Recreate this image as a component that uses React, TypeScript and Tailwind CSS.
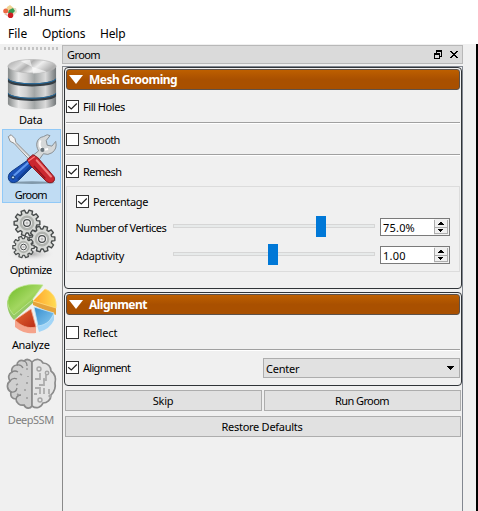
import type { ReactNode } from "react";

const tahoma = "font-['Noto_Sans','Open_Sans',sans-serif]";

function CheckBox({ label, checked = false, spacing = "tracking-[-0.45px]" }: { label: string; checked?: boolean; spacing?: string }) {
  return (
    <label className="flex h-[13px] items-center gap-1">
      <span className="block size-[13px] shrink-0 border border-[#333] bg-white">
        {checked && (
          <svg className="block" width="11" height="11" viewBox="0 0 11 11" fill="none" stroke="#222" strokeWidth="1.2">
            <path d="M1.2 5.3 4.3 8 9.8 2.5" />
          </svg>
        )}
      </span>
      <span className={`leading-[13px] whitespace-nowrap ${spacing}`}>{label}</span>
    </label>
  );
}

function GroupHeader({ title }: { title: string }) {
  return (
    <div className="mb-px flex h-[21px] items-center gap-[6px] rounded-[3px] border border-[#5e5148] bg-linear-to-b from-[#bd5f00] to-[#a95000] to-50% pl-[2px]">
      <svg width="14" height="9" viewBox="0 0 14 9">
        <path d="M0 0H14L7 9Z" fill="#fff" />
      </svg>
      <span className="text-[12px] leading-[16px] font-bold tracking-[-0.53px] text-white">{title}</span>
    </div>
  );
}

function Separator() {
  return <div className="h-[2px] border-t border-[#a0a0a0] bg-white" />;
}

function SliderRow({ label, spacing, track, value }: { label: string; spacing: string; track: ReactNode; value: string }) {
  return (
    <div className="flex h-[18px] items-center">
      <span className={`relative top-px left-[-0.5px] w-[97px] whitespace-nowrap ${spacing}`}>{label}</span>
      <div className="relative -top-px h-[4px] w-[202px] border border-[#d6d6d6] bg-[#e7eaea]">{track}</div>
      <div className="ml-[5px] flex h-[18px] w-[70px] border border-[#7a7a7a] bg-white">
        <span className="relative top-px flex-1 pl-[2px] leading-4 tracking-[0.2px]">{value}</span>
        <svg width="15" height="16" viewBox="0 0 15 16" shapeRendering="crispEdges">
          <path d="M0 0H15V16H0Z" fill="#f0f0f0" />
          <path d="M.5 1V14.5H13.5V1M.5 8.5H13.5" fill="none" stroke="#adadad" />
          <path d="M6 3h2v1h1v1h1v1H4V5h1V4h1zM4 10h5v1H8v1H7v1H6v-1H5v-1H4z" fill="#000" />
        </svg>
      </div>
    </div>
  );
}

function Tool({ label, icon, height, gap, spacing, active = false, disabled = false }: { label: string; icon: ReactNode; height: string; gap: string; spacing: string; active?: boolean; disabled?: boolean }) {
  return (
    <div className={`flex w-[59px] flex-col items-center border ${height} ${active ? "border-[#91c9f7] bg-[#c0dcf3]" : "border-transparent"} ${disabled ? "text-[#808080]" : ""}`}>
      {icon}
      <span className={`pr-[1.5px] leading-[16px] ${gap} ${spacing}`}>{label}</span>
    </div>
  );
}

function Disks() {
  return (
    <svg width="52" height="54" viewBox="0 0 52 54">
      <defs>
        <linearGradient id="metal">
          <stop stopColor="#858989" /><stop offset=".22" stopColor="#e6e6e6" /><stop offset=".38" stopColor="#d0d0d0" /><stop offset=".55" stopColor="#a2a6a6" /><stop offset=".78" stopColor="#dadada" /><stop offset="1" stopColor="#73787a" />
        </linearGradient>
        <linearGradient id="lid" x2="1" y2=".35">
          <stop stopColor="#a2a2a2" /><stop offset=".35" stopColor="#ddd" /><stop offset=".5" stopColor="#b0b0b0" /><stop offset=".7" stopColor="#eee" /><stop offset="1" stopColor="#b0b0b0" />
        </linearGradient>
      </defs>
      <path d="M1 39v8c5 7 45 7 50 0v-8z" fill="url(#metal)" />
      <path d="M1 35v4c5 6 45 6 50 0v-4z" fill="#353d43" />
      <path d="M1 24v11c5 7 45 7 50 0V24z" fill="url(#metal)" />
      <path d="M1 35.5c5 7 45 7 50 0" fill="none" stroke="#2470a8" />
      <path d="M1 20v4c5 6 45 6 50 0v-4z" fill="#353d43" />
      <path d="M1 8v12c5 7 45 7 50 0V8z" fill="url(#metal)" />
      <path d="M1 20.5c5 7 45 7 50 0" fill="none" stroke="#2470a8" />
      <ellipse cx="26" cy="7.5" rx="25" ry="7" fill="url(#lid)" stroke="#b0b0b0" strokeWidth=".6" />
      <path d="M26 8 14 2q6-1 10-1zM26 8l15 5q-8 2-14 2z" fill="#fff" opacity=".6" />
    </svg>
  );
}

function Tools() {
  return (
    <svg width="54" height="56" viewBox="-1 -2 56 58">
      <ellipse cx="27" cy="53.5" rx="24" ry="1.4" fill="#5f7584" opacity=".65" />
      <path d="M29 24 34 20C30 14 32 6 39 5l4-2 3 1-4 5 1 5 5 1 4-5q2 8-4 12-4 3-9 1l-5 7z" fill="#d5d8d9" stroke="#858c90" />
      <path d="M36 9q-3 7 3 10l5-1" fill="none" stroke="#fff" strokeWidth="2" />
      <circle cx="38" cy="19" r="2.2" fill="#68737a" />
      <path d="m28 26 5 5-20 20c-4 4-11 3-11-3 0-3 1-4 3-6z" fill="#1c52b8" stroke="#0c377f" />
      <path d="m27 29-19 17" stroke="#5f97ed" strokeWidth="2.2" strokeLinecap="round" />
      <path d="m29 33-17 17" stroke="#123f93" strokeWidth="2" />
      <circle cx="7" cy="48" r="1.7" fill="#c0dcf3" stroke="#082c62" />
      <path d="m2 5 3-2 4 4 1 4 16 16-2 2L8 12 4 10z" fill="#f4f4f4" stroke="#888" />
      <path d="m10 12 15 15" stroke="#aaa" />
      <path d="m22 29 6-5 5 3 17 20c3 5-3 9-8 5L25 35z" fill="#cb2730" stroke="#83151c" />
      <path d="m32 30 15 17" stroke="#f18282" strokeWidth="2.2" strokeLinecap="round" />
      <path d="m23 31 7-5" stroke="#ff7777" strokeWidth="1.3" />
      <path d="m29 36 12 13" stroke="#8e141e" strokeWidth="1.5" />
    </svg>
  );
}

function gearPath(teeth: number) {
  const points: string[] = [];
  const shape: [number, number][] = [[-0.38, 10], [-0.25, 13], [0.2, 13], [0.32, 10]];
  for (let i = 0; i < teeth; i++) {
    for (const [offset, radius] of shape) {
      const angle = ((i + offset) / teeth) * Math.PI * 2;
      points.push(`${(radius * Math.cos(angle)).toFixed(2)} ${(radius * Math.sin(angle)).toFixed(2)}`);
    }
  }
  return `M${points.join("L")}Z`;
}

function Gear({ x, y, s }: { x: number; y: number; s: number }) {
  return (
    <g transform={`translate(${x} ${y}) scale(${s})`} stroke="#484c4c" strokeWidth="1.4">
      <path d={gearPath(10)} fill="#d8dad7" strokeLinejoin="round" />
      <circle r="6.2" fill="#eee" stroke="#b0b3af" strokeWidth="2.4" />
      <circle r="3.4" fill="#f1f1f1" strokeWidth="1.2" />
      <circle r="1.5" fill="#c0c0c0" stroke="none" />
    </g>
  );
}

function Gears() {
  return (
    <svg width="52" height="53" viewBox="0 0 52 53">
      <defs><radialGradient id="shade"><stop stopColor="#888" /><stop offset="1" stopColor="#f0f0f0" stopOpacity="0" /></radialGradient></defs>
      <ellipse cx="25" cy="46" rx="24" ry="7" fill="url(#shade)" opacity=".7" />
      <Gear x={21} y={15} s={1} />
      <Gear x={36} y={31} s={1} />
      <Gear x={17.5} y={39} s={0.83} />
    </svg>
  );
}

function Pie() {
  return (
    <svg width="52" height="53" viewBox="0 0 52 53">
      <defs>
        <linearGradient id="green" x2="1" y2="1"><stop stopColor="#6dba25" /><stop offset=".5" stopColor="#a3d761" /><stop offset="1" stopColor="#65ac27" /></linearGradient>
        <linearGradient id="gold"><stop stopColor="#ffa32b" /><stop offset="1" stopColor="#ffdc52" /></linearGradient>
        <linearGradient id="blue" x2="1" y2="1"><stop stopColor="#368dce" /><stop offset="1" stopColor="#8acbf1" /></linearGradient>
        <linearGradient id="red" x2="1" y2="1"><stop stopColor="#e76b32" /><stop offset="1" stopColor="#b92b16" /></linearGradient>
      </defs>
      <path d="M1 17c0 9 2 15 7 20l19-17v-5L9 31z" fill="#95c965" />
      <path d="M8 32C-7 17 6-2 37 2L26 17Z" fill="url(#green)" stroke="#c2e795" strokeWidth=".8" />
      <path d="M50 24v8l-23-10v-4z" fill="#e5a33b" />
      <path d="M27 18 39 6c8 3 12 10 11 19Z" fill="url(#gold)" stroke="#ffda7b" strokeWidth=".8" />
      <path d="M48 31v6q-4 9-15 12l-2-7z" fill="#a2d5f7" />
      <path d="m28 24 20 6c-3 7-7 12-16 13Z" fill="url(#blue)" stroke="#c3e4f8" strokeWidth=".8" />
      <path d="M9 37v7c7 6 15 7 21 6v-6z" fill="#f5a38b" />
      <path d="m25 26 5 18c-8 2-15-1-21-7Z" fill="url(#red)" stroke="#f1a78b" strokeWidth=".8" />
    </svg>
  );
}

function Brain() {
  return (
    <svg width="52" height="53" viewBox="0 0 52 53" fill="none" stroke="#8b8b8b" strokeWidth="1.7">
      <path d="M26 4C23 1 20 1 18 3c-4-2-7 1-7 4-4 0-6 4-5 7-4 2-4 6-2 9-4 3-3 9 1 11-1 4 1 7 5 7 0 4 4 7 8 6 2 4 6 4 8 1z" fill="#cfcfcf" />
      <path d="M26 4c4-4 9-3 11 1 5 0 8 4 8 8 4 3 5 8 4 12 1 5-1 9-4 12 0 5-4 8-8 8-2 5-7 6-11 3z" fill="#e4e4e4" />
      <path d="M18 3q3 1 3 5m-10-1q4-1 6 3m-11 4q3-2 6 0m-8 9q3-4 7-2m-6 13q5 1 6-4m-1 11q1-4 5-4" stroke="#858585" strokeWidth="1.3" />
      <path d="M21 10v2m-5 5-2-1m8 9h-2m-1 8v-2m-9-4 2-1m-1 10 2 1m8 2v2m1-23v1" stroke="#999" strokeWidth="1.4" />
      <path d="M29 21h5v-6m4 5v7h-5m-4 3h5v6m4-6v6m-10 0h3m9-19v5h-3m6 9v5" stroke="#adadad" strokeWidth="1.8" />
      <circle cx="33" cy="11" r="2" strokeWidth="1.4" stroke="#a5a5a5" />
      <circle cx="41" cy="15" r="1.7" strokeWidth="1.4" stroke="#a5a5a5" />
      <circle cx="34" cy="42" r="2" strokeWidth="1.4" stroke="#a5a5a5" />
      <circle cx="44" cy="38" r=".8" stroke="#a5a5a5" />
    </svg>
  );
}

const button = "flex items-center justify-center border border-[#adadad] bg-[#e1e1e1]";

export default function App() {
  return (
    <div className={`flex h-[511px] w-[478px] flex-col overflow-hidden bg-[#f0f0f0] text-[11px] text-black ${tahoma}`}>
      <header className="h-[44px] bg-white text-[12px]">
        <div className="flex h-[23px] items-center gap-[6px] pl-[3px]">
          <svg width="14" height="14" viewBox="0 0 14 14">
            <path d="M4 2 7 0l5 4-4 5-5-4z" fill="#efd293" />
            <path d="m9 3 4 0 1 4-3 3-3-2z" fill="#e8dec5" />
            <circle cx="2.7" cy="6" r="2.5" fill="#ec6842" />
            <path d="m6 5 4-2 2 3-3 3-4-1z" fill="#359b50" />
            <circle cx="7.5" cy="10.3" r="2.8" fill="#ce1e21" />
            <path d="m1 9 3 0v2z" fill="#d9c7b1" />
          </svg>
          <span className="leading-[18px] tracking-[-0.1px]">all-hums</span>
        </div>
        <nav className="flex h-[21px] items-center gap-[16px] pl-[8px] tracking-[-0.2px]">
          <span className="w-[18px] tracking-normal">File</span>
          <span className="w-[42px]">Options</span>
          <span>Help</span>
        </nav>
      </header>

      <main className="flex flex-1">
        <aside className="flex w-[62px] flex-col pl-[2px]">
          <div className="mt-[3px] ml-[2px] h-[3px] w-[56px] bg-[repeating-linear-gradient(90deg,#c4c4c4_0_2px,transparent_2px_4px)]" />
          <div className="h-[8px]" />
          <Tool label="Data" height="h-[71px]" gap="mt-px" spacing="tracking-[-0.2px]" icon={<Disks />} />
          <Tool label="Groom" height="h-[74px]" gap="mt-px" spacing="relative top-px tracking-[-0.75px]" icon={<Tools />} active />
          <div className="h-[4px]" />
          <Tool label="Optimize" height="h-[75px]" gap="mt-px" spacing="tracking-[-0.6px]" icon={<Gears />} />
          <Tool label="Analyze" height="h-[75px]" gap="mt-px" spacing="tracking-[-0.3px]" icon={<Pie />} />
          <Tool label="DeepSSM" height="h-[75px]" gap="mt-px" spacing="tracking-[-0.5px]" icon={<Brain />} disabled />
        </aside>

        <section className="flex w-[401px] flex-col pt-px">
          <div className="flex h-[19px] items-center border border-[#b8b8b8] bg-[#dadada] pl-[4px]">
            <span className="relative top-px flex-1 tracking-[-0.6px]">Groom</span>
            <svg className="mr-[2px]" width="26" height="9" viewBox="0 0 26 9" fill="none" stroke="#000" shapeRendering="crispEdges">
              <path d="M3 .5h5M3 1.5h5M2.5 0v3M7.5 1v5H6M0 3.5h6M0 4.5h6M.5 3v6M5.5 4v5M0 8.5h6" />
              <path d="M16 1h2v1h1v1h2V2h1V1h2v1h-1v1h-1v1h-1v1h1v1h1v1h1v1h-2V7h-1V6h-2v1h-1v1h-2V7h1V6h1V5h1V4h-1V3h-1V2h-1z" fill="#000" stroke="none" />
            </svg>
          </div>

          <div className="mt-[2px] flex flex-1 flex-col border-x border-t border-[#828790] border-l-[#8a8a8a] pl-px">
            <div className="h-[222px] rounded-[4px] border border-[#303438] px-px pt-px">
              <GroupHeader title="Mesh Grooming" />
              <div className="h-[9px]" />
              <CheckBox label="Fill Holes" checked />
              <div className="h-[9px]" />
              <Separator />
              <div className="h-[9px]" />
              <CheckBox label="Smooth" spacing="tracking-[-0.6px]" />
              <div className="h-[8px]" />
              <Separator />
              <div className="h-[9px]" />
              <CheckBox label="Remesh" spacing="tracking-[-0.5px]" checked />
              <div className="mt-[8px] h-[86px] border border-[#dcdcdc] pt-[8px] pl-[9px]">
                <CheckBox label="Percentage" spacing="tracking-[-0.35px]" checked />
                <div className="h-[10px]" />
                <SliderRow label="Number of Vertices" spacing="tracking-[-0.5px]" value="75.0%" track={<div className="absolute top-[-9px] left-[142px] h-[21px] w-[10px] bg-[#0078d7]" />} />
                <div className="h-[10px]" />
                <SliderRow label="Adaptivity" spacing="tracking-[-0.3px]" value="1.00" track={<div className="absolute top-[-9px] left-[94px] h-[21px] w-[10px] bg-[#0078d7]" />} />
              </div>
            </div>

            <div className="mt-[3px] h-[94px] rounded-[4px] border border-[#303438] px-px pt-px">
              <GroupHeader title="Alignment" />
              <div className="h-[10px]" />
              <CheckBox label="Reflect" spacing="tracking-[-0.1px]" />
              <div className="h-[10px]" />
              <Separator />
              <div className="mt-[7px] flex h-[20px] items-start">
                <div className="w-[197px] pt-[3px]"><CheckBox label="Alignment" checked spacing="tracking-[-0.7px]" /></div>
                <div className="flex h-[20px] w-[197px] items-center justify-between border border-[#adadad] bg-[#e1e1e1] pr-[5px] pl-[2px]">
                  <span className="relative top-px tracking-[-0.25px]">Center</span>
                  <svg width="7" height="4" viewBox="0 0 7 4" shapeRendering="crispEdges"><path d="M0 0h7v1H6v1H5v1H4v1H3V3H2V2H1V1H0z" /></svg>
                </div>
              </div>
            </div>

            <div className="mt-[4px] ml-px flex gap-[2px]">
              <div className={`${button} h-[21px] w-[197px] pt-[2px] pr-px tracking-[-0.3px]`}>Skip</div>
              <div className={`${button} h-[21px] w-[197px] pt-[2px] pr-px tracking-[-0.6px]`}>Run Groom</div>
            </div>
            <div className={`${button} mt-[5px] ml-px h-[21px] w-[396px] pt-[2px] pr-[2px] tracking-[-0.27px]`}>Restore Defaults</div>
          </div>
        </section>
        <div className="ml-auto w-[2px] bg-black" />
      </main>
    </div>
  );
}
